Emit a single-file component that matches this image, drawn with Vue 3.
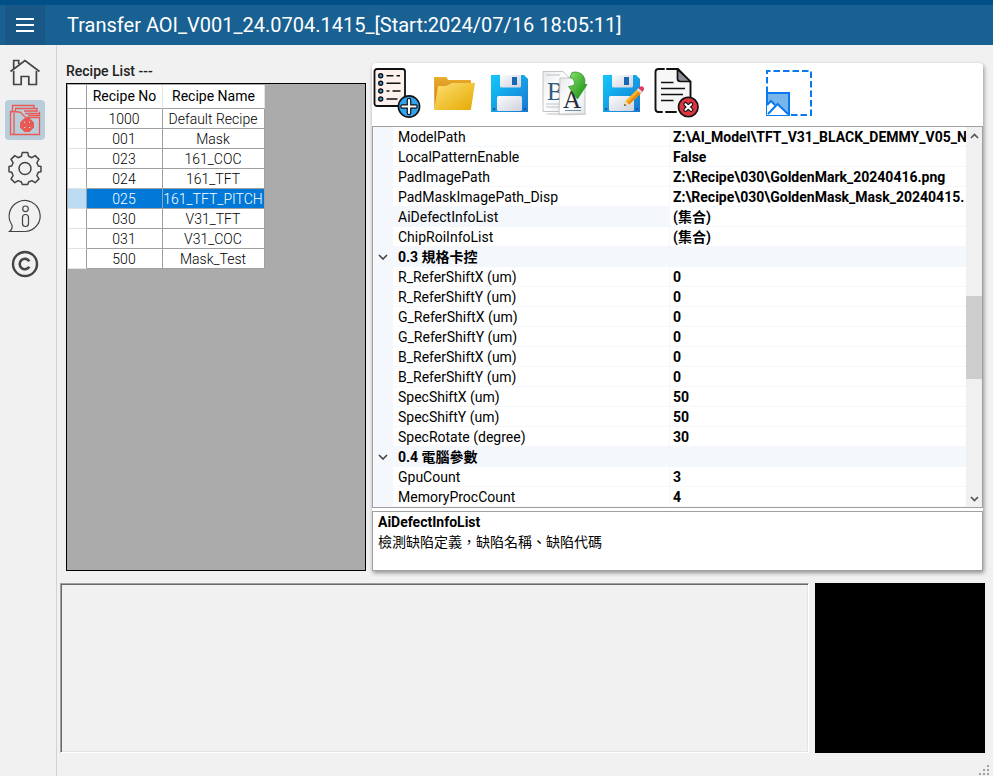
<script setup>
import { ref } from 'vue'

const selected = ref('025')

const recipes = [
  { no: '1000', name: 'Default Recipe' },
  { no: '001', name: 'Mask' },
  { no: '023', name: '161_COC' },
  { no: '024', name: '161_TFT' },
  { no: '025', name: '161_TFT_PITCH' },
  { no: '030', name: 'V31_TFT' },
  { no: '031', name: 'V31_COC' },
  { no: '500', name: 'Mask_Test' },
]

const properties = [
  { name: 'ModelPath', value: 'Z:\\AI_Model\\TFT_V31_BLACK_DEMMY_V05_N' },
  { name: 'LocalPatternEnable', value: 'False' },
  { name: 'PadImagePath', value: 'Z:\\Recipe\\030\\GoldenMark_20240416.png' },
  { name: 'PadMaskImagePath_Disp', value: 'Z:\\Recipe\\030\\GoldenMask_Mask_20240415.' },
  { name: 'AiDefectInfoList', value: '(集合)', active: true },
  { name: 'ChipRoiInfoList', value: '(集合)' },
  { category: '0.3 規格卡控' },
  { name: 'R_ReferShiftX (um)', value: '0' },
  { name: 'R_ReferShiftY (um)', value: '0' },
  { name: 'G_ReferShiftX (um)', value: '0' },
  { name: 'G_ReferShiftY (um)', value: '0' },
  { name: 'B_ReferShiftX (um)', value: '0' },
  { name: 'B_ReferShiftY (um)', value: '0' },
  { name: 'SpecShiftX (um)', value: '50' },
  { name: 'SpecShiftY (um)', value: '50' },
  { name: 'SpecRotate (degree)', value: '30' },
  { category: '0.4 電腦參數' },
  { name: 'GpuCount', value: '3' },
  { name: 'MemoryProcCount', value: '4' },
]
</script>

<template>
  <div class="window">
    <header class="titlebar">
      <button class="menu" type="button" aria-label="Menu">
        <svg viewBox="0 0 18 14" width="18" height="14"><path d="M0 1h18M0 7h18M0 13h18" stroke="#fff" stroke-width="2" /></svg>
      </button>
      <h1>Transfer AOI_V001_24.0704.1415_[Start:2024/07/16 18:05:11]</h1>
    </header>

    <div class="body">
      <nav class="sidebar">
        <button type="button" aria-label="Home">
          <svg viewBox="0 0 40 40" fill="none" stroke="#444" stroke-width="1.700">
            <path d="M5.500 19.500 20 8.500l14.500 11M8.700 16.500V8.500h5v3.500M8.700 19v13.500h7.500v-8h7.600v8h7.600V19" />
          </svg>
        </button>
        <button type="button" class="on" aria-label="Recipe">
          <svg viewBox="0 0 40 40" fill="none" stroke="#ea5a55" stroke-width="1.300">
            <path d="M7.500 11V5.500h21.500V8M10.500 11V8.500H32V12" />
            <path d="M5.500 11.500v23h29v-17H21.500c-3 0-4-5-7-5.500z" />
            <path d="M9 13v21M19 11h13M20 13.500h14.500M23 15.500h11.500v-4" />
            <path d="M19.500 18h5l4.500 4.500v5L24.500 32h-5L15 27.500v-5z" fill="#ea5a55" stroke="none" />
            <path d="M19.500 21.500v1.500M24.500 21.500v1.500M19 27.500h1.500M24 27.500h1.500" stroke="#b9cddb" stroke-width="1" />
          </svg>
        </button>
        <button type="button" aria-label="Settings">
          <svg viewBox="0 0 40 40" fill="none" stroke="#444" stroke-width="1.500" stroke-linejoin="round">
            <path d="M17.300 4.500h5.400l.9 3.800 3.300 1.400 3.300-2.100 3.800 3.800-2.100 3.300 1.400 3.300 2.700.5v5.200l-2.700.6-1.400 3.300 2.100 3.300-3.800 3.800-3.300-2.100-3.300 1.400-.9 2.500h-5.400l-.9-2.500-3.300-1.400-3.300 2.100L6 30.900l2.100-3.300-1.400-3.300-2.700-.6v-5.200l2.700-.5 1.400-3.300L6 11.400l3.800-3.800 3.300 2.100 3.300-1.400z" />
            <circle cx="20" cy="20.500" r="6" />
          </svg>
        </button>
        <button type="button" aria-label="Information">
          <svg viewBox="0 0 40 40" fill="none" stroke="#444" stroke-width="1.200">
            <path d="M4.500 35.500c2-1.500 3-4 2.500-6.500A15.500 15.500 0 1 1 20.500 35.500z" />
            <circle cx="20.500" cy="12.800" r="2.800" />
            <rect x="17.500" y="18.500" width="6" height="12" rx="3" />
          </svg>
        </button>
        <button type="button" aria-label="Copyright">
          <svg viewBox="0 0 40 40" fill="none" stroke="#444">
            <circle cx="20" cy="20" r="12" stroke-width="2.400" />
            <path d="M24.300 17.200a5.200 5.200 0 1 0 0 5.600" stroke-width="2.600" />
          </svg>
        </button>
      </nav>

      <main>
        <div class="top">
          <section class="recipes">
            <h2>Recipe List ---</h2>
            <div class="recipe-box">
              <table>
                <colgroup><col class="c-head"><col class="c-no"><col class="c-name"></colgroup>
                <thead>
                  <tr><th></th><th>Recipe No</th><th>Recipe Name</th></tr>
                </thead>
                <tbody>
                  <tr v-for="r in recipes" :key="r.no" :class="{ picked: r.no === selected }" @click="selected = r.no">
                    <td class="rowhead"></td>
                    <td>{{ r.no }}</td>
                    <td>{{ r.name }}</td>
                  </tr>
                </tbody>
              </table>
            </div>
          </section>

          <section class="card">
            <div class="toolbar">
              <button type="button" aria-label="Add recipe">
                <svg viewBox="0 0 48 50">
                  <rect x="1.500" y="1" width="30.500" height="37" rx="2.500" fill="#fdf1ee" stroke="#111" stroke-width="1.800" />
                  <path d="M13.500 7.700h7m3 0h3.500M13.500 15.300h14M13.500 23h3m3 0h8M13.500 31h11" stroke="#111" stroke-width="1.600" />
                  <g fill="#2fa5f0" stroke="#111" stroke-width="1.400">
                    <circle cx="7.700" cy="7.700" r="2" /><circle cx="7.700" cy="15.300" r="2" /><circle cx="7.700" cy="23" r="2" /><circle cx="7.700" cy="31" r="2" />
                    <circle cx="36" cy="38.500" r="10.600" stroke-width="1.600" />
                  </g>
                  <path d="M36 32v13M29.500 38.500h13" stroke="#111" stroke-width="4.600" stroke-linecap="round" />
                  <path d="M36 32v13M29.500 38.500h13" stroke="#fff" stroke-width="2.200" stroke-linecap="round" />
                </svg>
              </button>
              <button type="button" aria-label="Open folder">
                <svg viewBox="0 0 48 50">
                  <defs>
                    <linearGradient id="fback" x1="0" y1="0" x2="0" y2="1"><stop offset="0" stop-color="#e9ad2c" /><stop offset="1" stop-color="#c96f10" /></linearGradient>
                    <linearGradient id="ffront" x1="0" y1="0" x2="1" y2="1"><stop offset="0" stop-color="#ffdf72" /><stop offset="1" stop-color="#e3a900" /></linearGradient>
                  </defs>
                  <path d="M5 10q0-1 1-1h11q1 0 1 1l1 2h22q1 0 1 1v22H9l-3.500 6z" fill="url(#fback)" />
                  <path d="M9 18h8l6-3h23l-4 26q0 1-1 1H6q-1 0-.8-1z" fill="url(#ffront)" />
                </svg>
              </button>
              <button type="button" aria-label="Save">
                <svg viewBox="0 0 48 50">
                  <defs>
                    <linearGradient id="disk" x1="0" y1="0" x2="1" y2="1"><stop offset="0" stop-color="#12c8fb" /><stop offset="1" stop-color="#1878d0" /></linearGradient>
                    <linearGradient id="metal" x1="0" y1="0" x2="1" y2="1"><stop offset="0" stop-color="#fbfbfd" /><stop offset="1" stop-color="#cfd2dc" /></linearGradient>
                  </defs>
                  <path d="M6 7h33l4 4v33H6z" fill="url(#disk)" />
                  <path d="M15 7h21v11q0 1.500-1.500 1.500h-18Q15 19.500 15 18z" fill="url(#metal)" />
                  <rect x="27" y="9" width="5" height="8" fill="#1767b4" />
                  <rect x="12" y="28" width="25" height="15" rx="1.500" fill="url(#metal)" />
                  <path d="M8 40h2v2H8zM39 40h2v2h-2z" fill="#0d569e" />
                </svg>
              </button>
              <button type="button" aria-label="Rename">
                <svg viewBox="0 0 48 50">
                  <defs>
                    <linearGradient id="page" x1="0" y1="0" x2="1" y2="1"><stop offset="0" stop-color="#e7eaec" /><stop offset="0.500" stop-color="#fff" /><stop offset="1" stop-color="#e3e6e8" /></linearGradient>
                    <linearGradient id="green" x1="0" y1="0" x2="1" y2="1"><stop offset="0" stop-color="#8be26a" /><stop offset="1" stop-color="#0c8a0c" /></linearGradient>
                  </defs>
                  <ellipse cx="25" cy="46" rx="21" ry="1.500" fill="#ddd" />
                  <path d="M2 3.500h20l7 7V43.500H2z" fill="url(#page)" stroke="#b9bec2" stroke-width="0.900" />
                  <path d="M5 7h14M5 36h13M5 39h13" stroke="#b7c4cc" stroke-width="1" />
                  <text x="6" y="32" class="glyph" fill="#355b7a">B</text>
                  <path d="M19 10h25v36H18z" fill="url(#page)" stroke="#b9bec2" stroke-width="0.900" />
                  <text x="22" y="40" class="glyph" fill="#222d38">A</text>
                  <path d="M24 42.500h16" stroke="#6d8eaa" stroke-width="1" />
                  <path d="M31 4.500c5-1.500 11 1 12 5 1 3 .5 5 .5 7l2.500 0-9.500 14.500L27.500 18.500l5.500-1c1-4 0-7-4-8z" fill="url(#green)" stroke="#238b1d" stroke-width="0.700" />
                </svg>
              </button>
              <button type="button" aria-label="Save as">
                <svg viewBox="0 0 48 50">
                  <path d="M6 7h33l4 4v33H6z" fill="url(#disk)" />
                  <path d="M15 7h21v11q0 1.500-1.500 1.500h-18Q15 19.500 15 18z" fill="url(#metal)" />
                  <rect x="27" y="9" width="5" height="8" fill="#1767b4" />
                  <rect x="12" y="28" width="25" height="15" rx="1.500" fill="url(#metal)" />
                  <path d="M8 40h2v2H8zM39 40h2v2h-2z" fill="#0d569e" />
                  <path d="M27 38l1.500-5L41 20.500l4 4L32 36.500z" fill="#fbb324" />
                  <path d="M30.500 35 43 22.500l2 2L32 36.500z" fill="#e88612" />
                  <path d="M27 38l1.500-5 3.500 3.500z" fill="#f6dcb4" />
                  <path d="M27 38l.8-2.200 1.400 1.400z" fill="#333" />
                  <path d="M39.800 21.700l1.700-1.700 4 4-1.700 1.700z" fill="#d5dbe4" />
                  <path d="M41.500 20l2-1.500q1.500-.8 2.800.5t.5 2.800L45.500 24z" fill="#e4395b" />
                </svg>
              </button>
              <button type="button" aria-label="Delete recipe">
                <svg viewBox="0 0 48 50">
                  <path d="M5.500 1H25l12.500 13v28q0 2-2 2h-30q-3 0-3-3V4q0-3 3-3z" fill="#f7f7f7" />
                  <path d="M14 1H25l12.500 13v16M23 44H13M9 44H5.500q-3 0-3-3V4q0-3 3-3H11" fill="none" stroke="#111" stroke-width="1.900" stroke-linecap="round" />
                  <path d="M24.500 1.500v9q0 3 3 3h10z" fill="#8e8e98" stroke="#111" stroke-width="1.700" stroke-linejoin="round" />
                  <path d="M8 14.500h12.500M8 20.500h24M8 26.500h22M8 32.500h12.500" stroke="#111" stroke-width="1.700" />
                  <circle cx="35.300" cy="39" r="9.800" fill="#dc3540" stroke="#111" stroke-width="1.600" />
                  <path d="M32.500 36.200l5.600 5.600M38.100 36.200l-5.600 5.600" stroke="#111" stroke-width="4.400" stroke-linecap="round" />
                  <path d="M32.500 36.200l5.600 5.600M38.100 36.200l-5.600 5.600" stroke="#fff" stroke-width="2.100" stroke-linecap="round" />
                </svg>
              </button>
              <button type="button" class="apart" aria-label="Select region">
                <svg viewBox="0 0 48 50" fill="none" stroke="#0a78f0" stroke-width="2">
                  <path d="M2 25V3h44v44H24" stroke-dasharray="6.500 3" />
                  <rect x="2" y="25" width="22" height="22" fill="#78b5ea" />
                  <path d="M2 36l3.500-3 4 4 3-2L23 47H2z" fill="#fff" stroke="none" />
                  <path d="M2 37l4-4 4 4M3 46l9.500-10L23 46" />
                </svg>
              </button>
            </div>

            <div class="propgrid">
              <div class="proprows">
                <table>
                  <colgroup><col class="p-gutter"><col class="p-name"><col></colgroup>
                  <tbody>
                    <template v-for="(p, i) in properties" :key="i">
                      <tr v-if="p.category" class="category">
                        <td class="gutter">
                          <button type="button" :aria-label="p.category">
                            <svg viewBox="0 0 10 6" width="10" height="6"><path d="M1 1l4 4 4-4" fill="none" stroke="#444" stroke-width="1.600" /></svg>
                          </button>
                        </td>
                        <th colspan="2">{{ p.category }}</th>
                      </tr>
                      <tr v-else :class="{ active: p.active }">
                        <td class="gutter"></td>
                        <td class="pname">{{ p.name }}</td>
                        <td class="pvalue">{{ p.value }}</td>
                      </tr>
                    </template>
                  </tbody>
                </table>
              </div>
              <div class="scrollbar">
                <button type="button" aria-label="Scroll up">
                  <svg viewBox="0 0 9 6" width="9" height="6"><path d="M1 5l3.500-3.500L8 5" fill="none" stroke="#555" stroke-width="1.700" /></svg>
                </button>
                <div class="track">
                  <div class="before"></div>
                  <div class="thumb"></div>
                  <div class="after"></div>
                </div>
                <button type="button" aria-label="Scroll down">
                  <svg viewBox="0 0 9 6" width="9" height="6"><path d="M1 1l3.500 3.500L8 1" fill="none" stroke="#555" stroke-width="1.700" /></svg>
                </button>
              </div>
            </div>

            <div class="help">
              <strong>AiDefectInfoList</strong>
              <p>檢測缺陷定義，缺陷名稱、缺陷代碼</p>
            </div>
          </section>
        </div>

        <div class="bottom">
          <div class="log"></div>
          <div class="preview"></div>
        </div>

        <footer>
          <svg viewBox="0 0 10 10" width="10" height="10" fill="#a0a0a0">
            <path d="M8 0h2v2H8zM4 4h2v2H4zM8 4h2v2H8zM0 8h2v2H0zM4 8h2v2H4zM8 8h2v2H8z" />
          </svg>
        </footer>
      </main>
    </div>
  </div>
</template>

<style>
body {
  background: #f1f1f1;
}
</style>

<style scoped>
.window {
  display: flex;
  flex-direction: column;
  height: 100vh;
  min-height: 620px;
  background: #f1f1f1;
  color: #000;
  font: 14px/20px Roboto, "Noto Sans CJK TC", sans-serif;
}
button {
  display: flex;
  align-items: center;
  justify-content: center;
  padding: 0;
  border: 0;
  background: none;
}
h1, h2, p {
  margin: 0;
}
table {
  border-spacing: 0;
  table-layout: fixed;
}
td, th {
  box-sizing: border-box;
  padding: 0;
  white-space: nowrap;
  overflow: hidden;
}

.titlebar {
  display: flex;
  align-items: center;
  flex: none;
  height: 40px;
  padding-left: 5px;
  border-top: 5px solid #004f87;
  background: #196193;
}
.menu {
  width: 40px;
  height: 40px;
  background: #195886;
}
h1 {
  margin-left: 22px;
  color: #fff;
  font-size: 20px;
  font-weight: 400;
  line-height: 40px;
  white-space: nowrap;
}

.body {
  display: flex;
  flex: 1;
  min-height: 0;
}
.sidebar {
  display: flex;
  flex-direction: column;
  flex: none;
  gap: 8px;
  width: 51px;
  padding: 7px 0 0 5px;
  border-right: 1px solid #d3d3d3;
}
.sidebar button {
  width: 40px;
  height: 40px;
  border-radius: 4px;
}
.sidebar svg {
  width: 40px;
  height: 40px;
}
.sidebar .on {
  background: #b9cddb;
}

main {
  display: flex;
  flex-direction: column;
  flex: 1;
  min-width: 0;
}
.top {
  display: grid;
  grid-template-columns: 300px minmax(0, 1fr);
  grid-template-rows: minmax(0, 1fr);
  gap: 6px;
  flex: 1;
  min-height: 0;
  padding: 18px 10px 0 9px;
}
.recipes {
  display: flex;
  flex-direction: column;
}
h2 {
  height: 20px;
  color: #222;
  font-size: 14px;
  font-weight: 500;
  line-height: 17px;
}
.recipe-box {
  flex: 1;
  padding: 1px;
  border: 1px solid #000;
  background: #ababab;
}
.recipe-box table {
  width: 197px;
  background: #fff;
}
.c-head { width: 19px; }
.c-no { width: 76px; }
.c-name { width: 102px; }
.recipe-box th {
  height: 24px;
  padding-bottom: 2px;
  border-right: 1px solid #e3e3e3;
  border-bottom: 1px solid #a0a0a0;
  font-weight: 400;
}
.recipe-box th:first-child {
  border-right-color: #a0a0a0;
}
.recipe-box td {
  height: 20px;
  padding: 1px 1px 0 0;
  border-right: 1px solid #a0a0a0;
  border-bottom: 1px solid #a0a0a0;
  font-weight: 300;
  line-height: 18px;
  text-align: center;
}
.recipe-box .rowhead {
  border-bottom-color: #e3e3e3;
}
.picked td {
  background: #0078d7;
  color: #fff;
}
.picked .rowhead {
  background: #bcdcf4;
}

.card {
  display: flex;
  flex-direction: column;
  min-width: 0;
  border-radius: 4px 4px 0 0;
  background: #fff;
  box-shadow: 1px 2px 4px rgba(0, 0, 0, 0.4);
}
.toolbar {
  display: flex;
  flex: none;
  gap: 8px;
  padding: 5px 1px 8px;
}
.toolbar button {
  width: 48px;
  height: 50px;
}
.toolbar svg {
  width: 48px;
  height: 50px;
}
.toolbar .apart {
  margin-left: 56px;
}
.glyph {
  font: 25px "Liberation Serif", serif;
}

.propgrid {
  display: flex;
  flex: 1;
  min-height: 0;
  border: 1px solid #a0a0a0;
}
.proprows {
  flex: 1;
  min-width: 0;
  overflow: hidden;
}
.proprows table {
  width: 100%;
}
.p-gutter { width: 20px; }
.p-name { width: 277px; }
.proprows td, .proprows th {
  height: 20px;
  padding-top: 1px;
  border-bottom: 1px solid #f4f7fc;
  line-height: 18px;
  text-align: left;
}
.proprows .gutter {
  background: #f4f7fc;
}
.gutter button {
  width: 20px;
  height: 18px;
}
.proprows .pname {
  padding-left: 5px;
  border-right: 1px solid #f4f7fc;
}
.proprows .pvalue {
  padding-left: 3px;
  font-weight: 700;
}
.active .pname, .category th {
  background: #f4f7fc;
}
.proprows .category th {
  padding-left: 5px;
  font-weight: 700;
}
.scrollbar {
  display: flex;
  flex-direction: column;
  flex: none;
  width: 16px;
  background: #f0f0f0;
}
.scrollbar button {
  width: 16px;
  height: 17px;
}
.track {
  display: flex;
  flex-direction: column;
  flex: 1;
}
.before { flex: 152; }
.thumb { flex: 83; background: #cdcdcd; }
.after { flex: 111; }

.help {
  flex: none;
  min-height: 58px;
  margin-top: 3px;
  border: 1px solid #a0a0a0;
}
.help strong, .help p {
  display: block;
  padding-left: 5px;
}

.bottom {
  display: grid;
  grid-template-columns: minmax(0, 1fr) 170px;
  gap: 6px;
  flex: none;
  height: 170px;
  padding: 12px 8px 0 3px;
}
.log {
  border: 1px solid;
  border-color: #a0a0a0 #fff #fff #a0a0a0;
  box-shadow: inset 1px 1px #696969, inset -1px -1px #e3e3e3;
}
.preview {
  background: #000;
}
footer {
  display: flex;
  align-items: flex-end;
  justify-content: flex-end;
  flex: none;
  height: 22px;
  padding: 0 4px 1px 0;
}
</style>
